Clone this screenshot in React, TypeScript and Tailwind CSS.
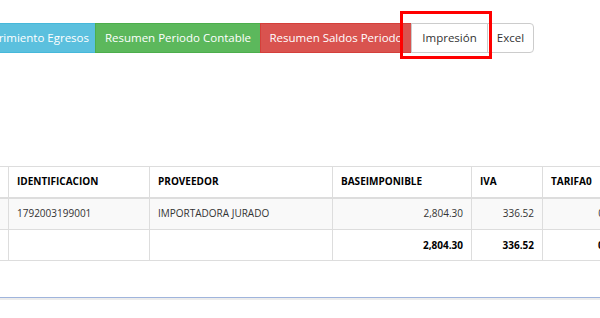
import React from 'react';

const buttons = [
  { label: 'rimiento Egresos', cls: 'bg-[#5bc0de] border-[#46b8da] text-white w-[130px] text-right pr-[6px]' },
  { label: 'Resumen Periodo Contable', cls: 'bg-[#5cb85c] border-[#4cae4c] text-white w-[166px]' },
  { label: 'Resumen Saldos Periodo', cls: 'bg-[#d9534f] border-[#d43f3a] text-white w-[152px]' },
  { label: 'Impresión', cls: 'bg-white border-[#cccccc] text-[#333] w-[77px]' },
  { label: 'Excel', cls: 'bg-white border-[#cccccc] text-[#333] w-[47px] rounded-r-[4px]' },
];

export default function App() {
  return (
    <div
      className="relative w-[600px] h-[318px] overflow-hidden bg-white"
      style={{ fontFamily: '"Open Sans", "Liberation Sans", sans-serif' }}
    >
      {/* toolbar */}
      <div className="flex h-[30px] mt-[23px] ml-[-33px]">
        {buttons.map((b) => (
          <button
            key={b.label}
            className={`shrink-0 h-[30px] border -ml-px whitespace-nowrap overflow-hidden text-[11.5px] leading-none ${b.cls}`}
          >
            {b.label}
          </button>
        ))}
      </div>

      {/* highlight */}
      <div className="absolute left-[400px] top-[11px] w-[92px] h-[48px] border-[3px] border-[#ff0000]" />

      {/* table */}
      <div className="mt-[113px] ml-[-42px] w-[700px]">
        <table className="table-fixed w-[668px] border-collapse text-[10px] text-[#333]">
          <colgroup>
            <col className="w-[50px]" />
            <col className="w-[141px]" />
            <col className="w-[183px]" />
            <col className="w-[139px]" />
            <col className="w-[71px]" />
            <col className="w-[84px]" />
          </colgroup>
          <thead>
            <tr className="h-[31px] text-black font-bold text-left">
              <th className="border border-[#ddd] border-b-2 px-2"></th>
              <th className="border border-[#ddd] border-b-2 px-2">IDENTIFICACION</th>
              <th className="border border-[#ddd] border-b-2 px-2">PROVEEDOR</th>
              <th className="border border-[#ddd] border-b-2 px-2">BASEIMPONIBLE</th>
              <th className="border border-[#ddd] border-b-2 px-2">IVA</th>
              <th className="border border-[#ddd] border-b-2 px-2">TARIFA0</th>
            </tr>
          </thead>
          <tbody>
            <tr className="h-[32px] bg-[#f9f9f9]">
              <td className="border border-[#ddd] px-2"></td>
              <td className="border border-[#ddd] px-2">1792003199001</td>
              <td className="border border-[#ddd] px-2">IMPORTADORA JURADO</td>
              <td className="border border-[#ddd] px-2 text-right">2,804.30</td>
              <td className="border border-[#ddd] px-2 text-right">336.52</td>
              <td className="border border-[#ddd] px-2 text-right">0.00</td>
            </tr>
            <tr className="h-[31px] font-bold text-black">
              <td className="border border-[#ddd] px-2"></td>
              <td className="border border-[#ddd] px-2"></td>
              <td className="border border-[#ddd] px-2"></td>
              <td className="border border-[#ddd] px-2 text-right">2,804.30</td>
              <td className="border border-[#ddd] px-2 text-right">336.52</td>
              <td className="border border-[#ddd] px-2 text-right">0.00</td>
            </tr>
          </tbody>
        </table>
      </div>

      {/* panel bottom edge */}
      <div className="mt-[36px] h-px bg-[#9fb4dc]" />
      <div className="h-[2px] bg-[#ececec]" />
    </div>
  );
}
